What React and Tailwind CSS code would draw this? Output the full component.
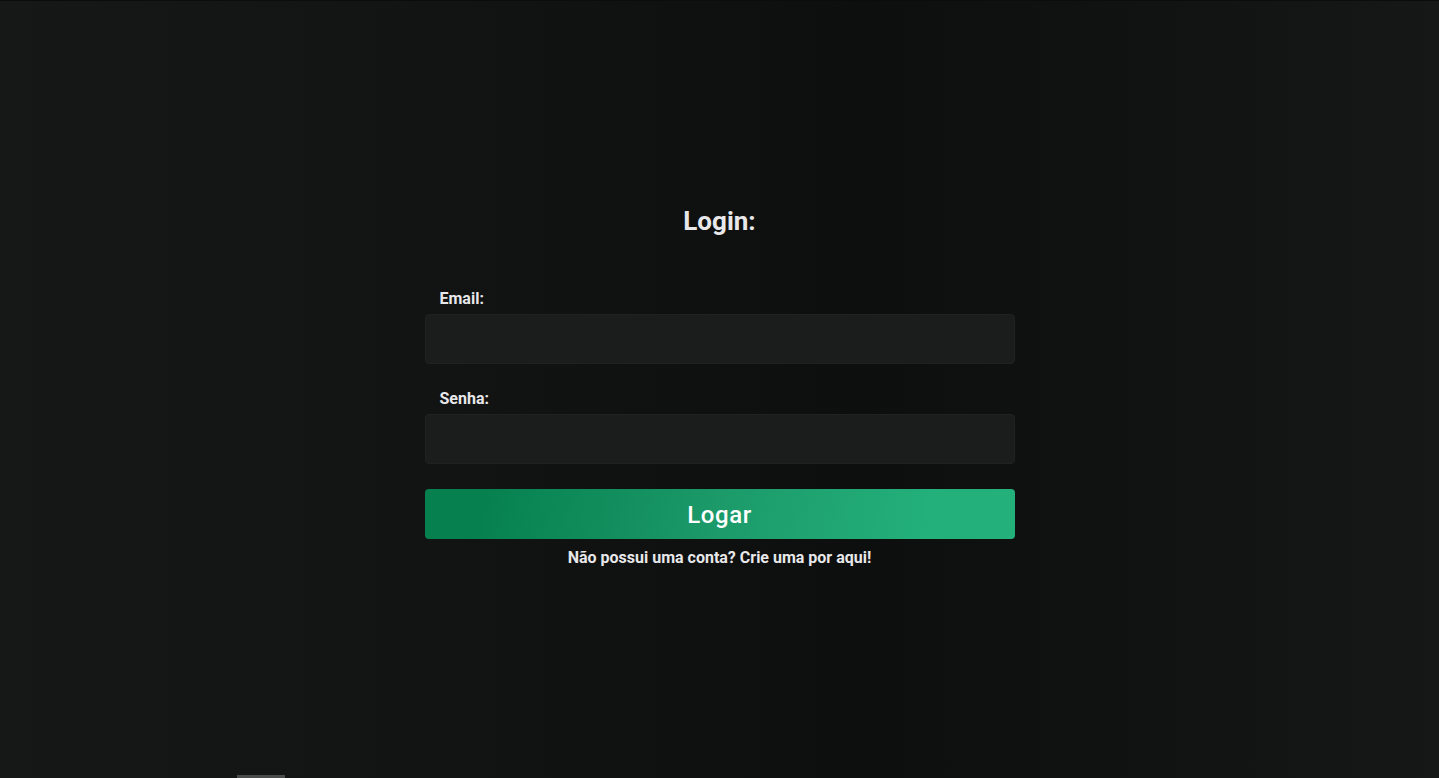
export default function App() {
  return (
    <div className="relative flex min-h-[778px] w-full flex-col items-center border-t border-[#0b0c0c] bg-[linear-gradient(90deg,#161817_0%,#121413_30%,#0d0e0e_60%,#121413_85%,#161817_100%)] font-['Roboto',sans-serif] text-[#e8e8ea]">
      <h1 className="mt-[204px] text-[26px] font-bold leading-[32px]">Login:</h1>

      <form className="mt-[52px] flex w-[590px] flex-col" onSubmit={(e) => e.preventDefault()}>
        <label className="px-[15px] text-[16px] font-bold leading-[19px]">Email:</label>
        <input
          type="email"
          className="mt-[6px] h-[50px] rounded-[4px] border border-[#202221] bg-[#1b1c1c] px-3 text-white outline-none"
        />

        <label className="mt-[25px] px-[15px] text-[16px] font-bold leading-[19px]">Senha:</label>
        <input
          type="password"
          className="mt-[6px] h-[50px] rounded-[4px] border border-[#202221] bg-[#1b1c1c] px-3 text-white outline-none"
        />

        <button
          type="submit"
          className="mt-[25px] h-[50px] rounded-[4px] bg-[linear-gradient(100deg,#06804f_10%,#1c9a6a_50%,#23b07b_85%)] pt-[2px] text-[24px] font-medium tracking-[0.6px] text-white"
        >
          Logar
        </button>

        <p className="mt-[9px] text-center text-[16px] font-bold leading-[19px]">
          Não possui uma conta? Crie uma por aqui!
        </p>
      </form>

      <div className="absolute bottom-0 left-[237px] h-[3px] w-[48px] bg-[#4a4b4b]" />
    </div>
  )
}
